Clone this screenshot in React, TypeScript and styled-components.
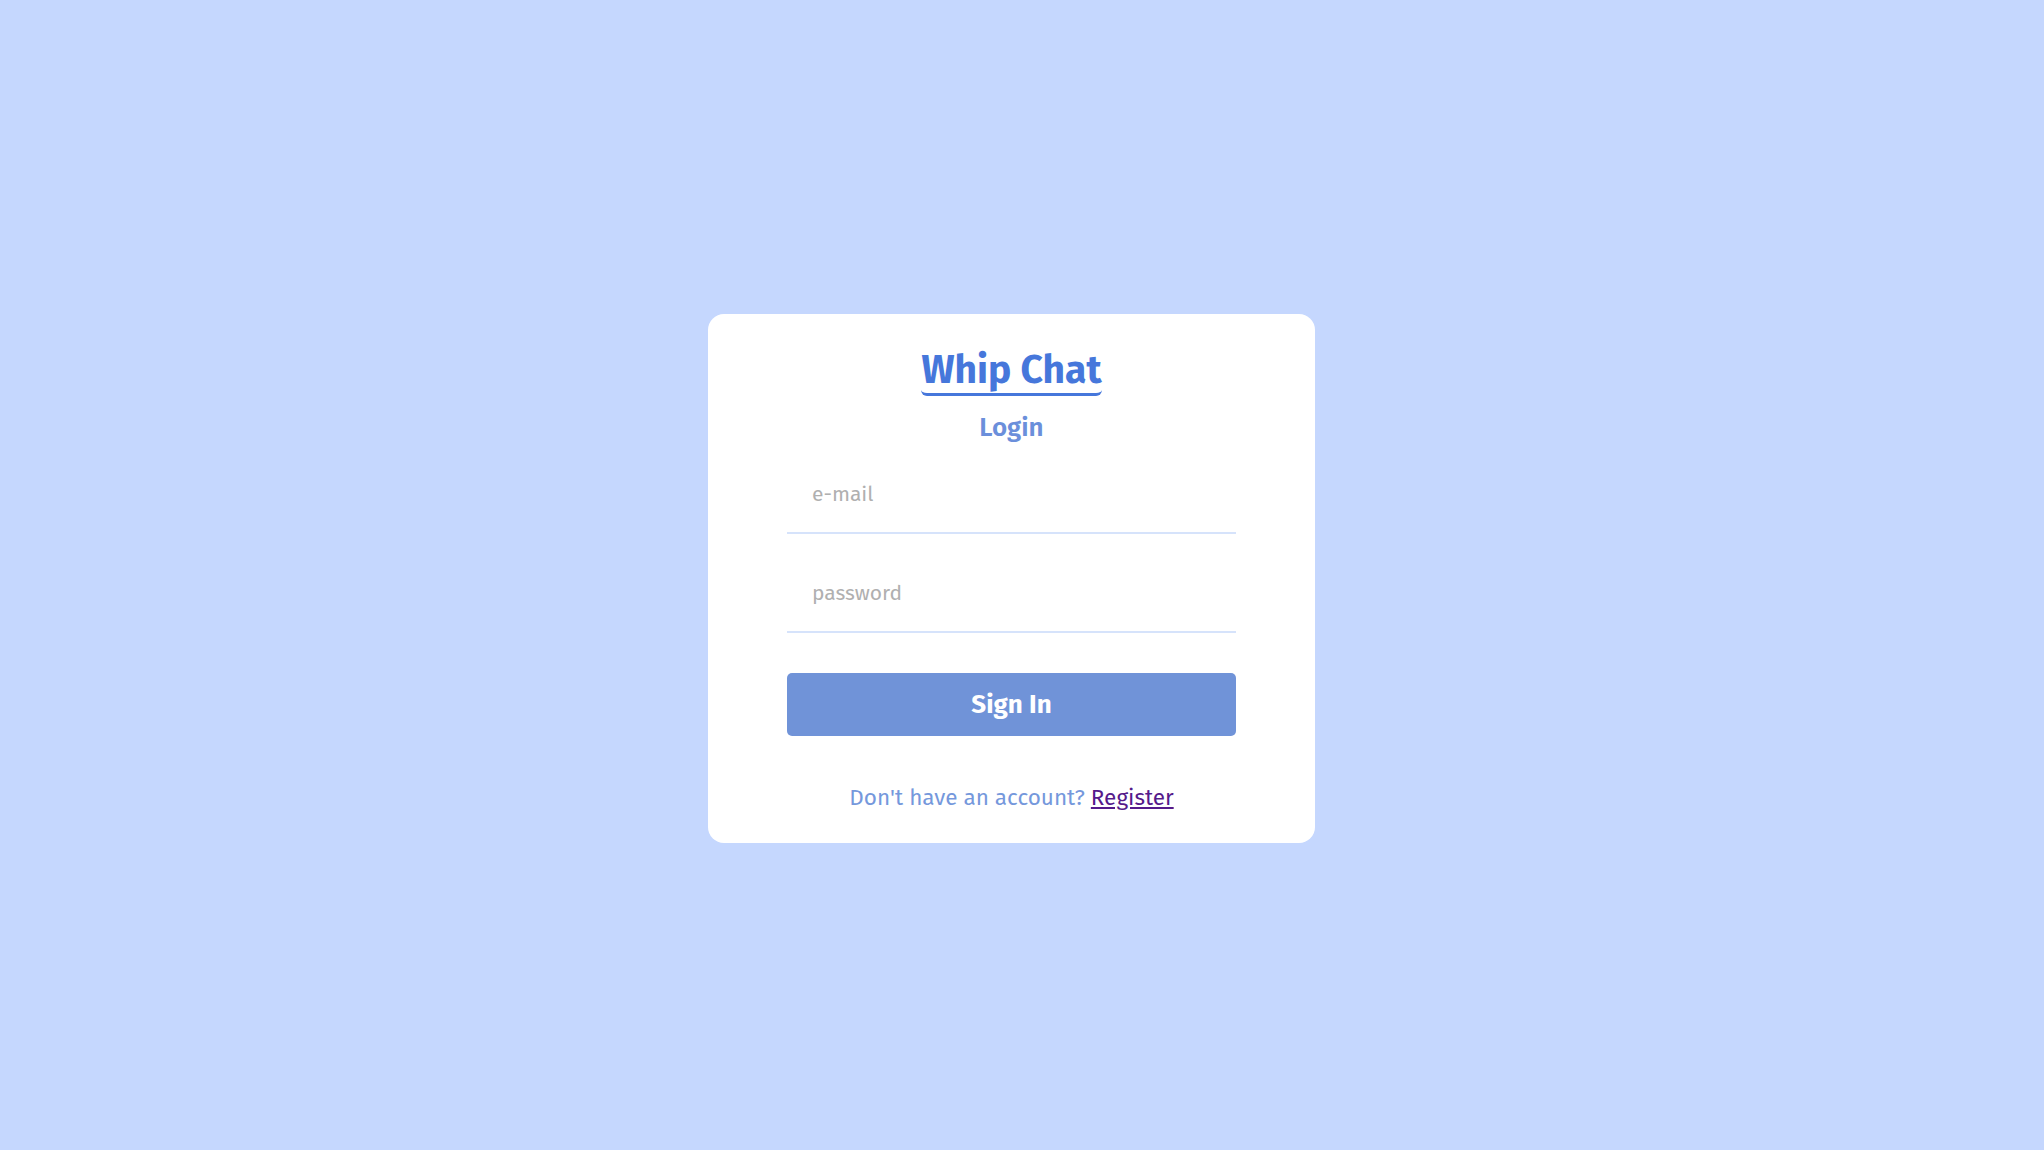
import React from 'react'
import styled, { createGlobalStyle } from 'styled-components'

const GlobalStyle = createGlobalStyle`
  html, body {
    margin: 0;
    padding: 0;
    background: #c5d7fe;
  }
  body {
    font-family: 'Fira Sans', Lato, 'Liberation Sans', sans-serif;
  }
  * {
    box-sizing: border-box;
  }
`

export default function App() {
  return (
    <Page>
      <GlobalStyle />
      <Card>
        <Title>Whip Chat</Title>
        <Subtitle>Login</Subtitle>
        <Form onSubmit={e => e.preventDefault()}>
          <Field type="email" placeholder="e-mail" />
          <Field type="password" placeholder="password" />
          <SubmitButton type="submit">Sign In</SubmitButton>
        </Form>
        <Footer>
          Don't have an account? <RegisterLink href="#register">Register</RegisterLink>
        </Footer>
      </Card>
    </Page>
  )
}

const { Page, Card, Title, Subtitle, Form, Field, SubmitButton, Footer, RegisterLink } = {
  Page: styled.div`
    width: 100%;
    min-height: 100vh;
    display: flex;
    align-items: center;
    justify-content: center;
    padding: 6px 21px 0 0;
    background: #c5d7fe;
  `,
  Card: styled.div`
    width: 607px;
    display: flex;
    flex-direction: column;
    align-items: center;
    padding: 35px 79px 33px;
    background: #ffffff;
    border-radius: 16px;
  `,
  Title: styled.h1`
    margin: 0;
    padding-bottom: 2px;
    font-family: 'Fira Sans', Lato, sans-serif;
    font-size: 39px;
    line-height: 42px;
    font-weight: 700;
    color: #4677db;
    border-bottom: 3px solid #4677db;
    border-radius: 6px;
  `,
  Subtitle: styled.h2`
    margin: 18px 0 0;
    font-family: 'Fira Sans', Lato, sans-serif;
    font-size: 26px;
    line-height: 27px;
    font-weight: 600;
    color: #6b8fdb;
  `,
  Form: styled.form`
    width: 100%;
    display: flex;
    flex-direction: column;
    margin-top: 22px;
  `,
  Field: styled.input`
    width: 100%;
    height: 71px;
    padding: 0 25px 6px;
    border: none;
    border-bottom: 2px solid #d6e3fb;
    outline: none;
    background: transparent;
    font-family: 'Fira Sans', Lato, sans-serif;
    font-size: 21px;
    color: #333;
    & + & {
      margin-top: 28px;
    }
    &::placeholder {
      color: #b0b0b0;
    }
  `,
  SubmitButton: styled.button`
    width: 100%;
    height: 63px;
    margin-top: 40px;
    border: none;
    border-radius: 5px;
    background: #7093d8;
    color: #ffffff;
    font-family: 'Fira Sans', Lato, sans-serif;
    font-size: 26px;
    font-weight: 700;
    cursor: pointer;
  `,
  Footer: styled.p`
    margin: 49px 0 0;
    font-family: 'Fira Sans', Lato, sans-serif;
    font-size: 22.5px;
    line-height: 25px;
    color: #7598dc;
  `,
  RegisterLink: styled.a`
    color: #551a8b;
    text-decoration: underline;
  `
}
